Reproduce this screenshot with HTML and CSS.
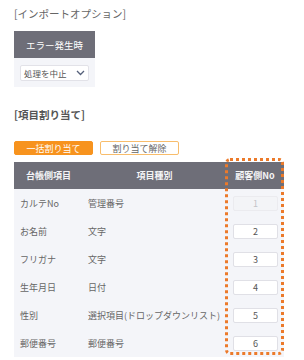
FILE: index.html
```html
<!DOCTYPE html>
<html lang="ja">
<head>
  <meta charset="UTF-8" />
  <meta name="viewport" content="width=device-width, initial-scale=1.0"/>
  <title>インポートオプション</title>
  <link rel="stylesheet" href="styles.css">
</head>
<body>
  <div class="container">
    <h2 class="title">[インポートオプション]</h2>

    <table class="option-table">
      <tr><th>エラー発生時</th></tr>
      <tr>
        <td>
          <div class="select-box">
            <span>処理を中止</span>
            <svg width="9" height="6" viewBox="0 0 9 6"><path d="M1 1 L4.5 4.5 L8 1" fill="none" stroke="#55607a" stroke-width="1.3"/></svg>
          </div>
        </td>
      </tr>
    </table>

    <h2 class="title title-bold">[項目割り当て]</h2>

    <div class="buttons">
      <button class="button button-main" type="button">一括割り当て</button>
      <button class="button button-sub" type="button">割り当て解除</button>
    </div>

    <div class="map-wrap">
      <table class="map-table">
        <colgroup>
          <col class="col-name">
          <col class="col-type">
          <col class="col-no">
        </colgroup>
        <tr>
          <th>台帳側項目</th>
          <th>項目種別</th>
          <th>顧客側No</th>
        </tr>
        <tr>
          <td>カルテNo</td>
          <td>管理番号</td>
          <td class="no"><input type="text" value="1" disabled></td>
        </tr>
        <tr>
          <td>お名前</td>
          <td>文字</td>
          <td class="no"><input type="text" value="2"></td>
        </tr>
        <tr>
          <td>フリガナ</td>
          <td>文字</td>
          <td class="no"><input type="text" value="3"></td>
        </tr>
        <tr>
          <td>生年月日</td>
          <td>日付</td>
          <td class="no"><input type="text" value="4"></td>
        </tr>
        <tr>
          <td>性別</td>
          <td>選択項目(ドロップダウンリスト)</td>
          <td class="no"><input type="text" value="5"></td>
        </tr>
        <tr>
          <td>郵便番号</td>
          <td>郵便番号</td>
          <td class="no"><input type="text" value="6"></td>
        </tr>
      </table>
      <div class="highlight"></div>
    </div>
  </div>
</body>
</html>
```

FILE: styles.css
```css
body {
  font-family: "Noto Sans CJK JP", "Noto Sans", sans-serif;
  background-color: #fff;
  color: #666;
  margin: 0;
  padding: 0;
}
.container {
  padding: 7px 14px 0;
}
.title {
  margin: 0;
  font-size: 10.5px;
  line-height: 14px;
  font-weight: normal;
  color: #666;
}
.title-bold {
  font-weight: bold;
  color: #555;
  margin-top: 21px;
}
.option-table {
  border-collapse: collapse;
  width: 81px;
  margin-top: 10px;
}
.option-table th {
  height: 27px;
  padding: 0;
  background-color: #6e6e78;
  color: #fff;
  font-size: 9.5px;
  font-weight: normal;
}
.option-table td {
  height: 29px;
  padding: 0 6px;
  background-color: #f4f5f9;
}
.select-box {
  display: flex;
  align-items: center;
  justify-content: space-between;
  height: 16px;
  box-sizing: border-box;
  padding: 0 3px 0 3px;
  background-color: #fff;
  border: 1px solid #e2e2e8;
  border-radius: 2px;
  font-size: 8.5px;
  color: #555;
}
.buttons {
  display: flex;
  gap: 7px;
  margin-top: 19px;
}
.button {
  width: 79px;
  height: 14px;
  padding: 0;
  box-sizing: border-box;
  border-radius: 2px;
  font-family: inherit;
  font-size: 9px;
  line-height: 1;
}
.button-main {
  background-color: #f7931e;
  border: 1px solid #f7931e;
  color: #fff;
}
.button-sub {
  background-color: #fff;
  border: 1px solid #f8bd6c;
  color: #666;
}
.map-wrap {
  position: relative;
  margin-top: 7px;
}
.map-table {
  border-collapse: collapse;
  table-layout: fixed;
  width: 270px;
  font-size: 9px;
}
.col-name { width: 69px; }
.col-type { width: 143px; }
.col-no { width: 58px; }
.map-table th {
  height: 27px;
  padding: 0;
  background-color: #6e6e78;
  color: #f4f4f6;
  font-weight: bold;
  text-align: center;
  white-space: nowrap;
}
.map-table td {
  height: 28px;
  padding: 0 0 0 6px;
  background-color: #f4f5f9;
  color: #666;
  white-space: nowrap;
}
.map-table td:nth-child(2) {
  padding-left: 5px;
}
.map-table td.no {
  padding: 0 0 0 7px;
}
.map-table input {
  display: block;
  width: 45px;
  height: 15px;
  box-sizing: border-box;
  padding: 0;
  border: 1px solid #e0e0e6;
  border-radius: 2px;
  background-color: #fff;
  font-family: inherit;
  font-size: 9px;
  color: #555;
  text-align: center;
}
.map-table input:disabled {
  background-color: #f3f4f7;
  border-color: #ebebef;
  color: #c4c4c8;
}
.highlight {
  position: absolute;
  top: -4px;
  left: 211px;
  width: 59px;
  height: 197px;
  box-sizing: border-box;
  border: 3px dotted #ec7a2a;
  border-radius: 5px;
}
```
